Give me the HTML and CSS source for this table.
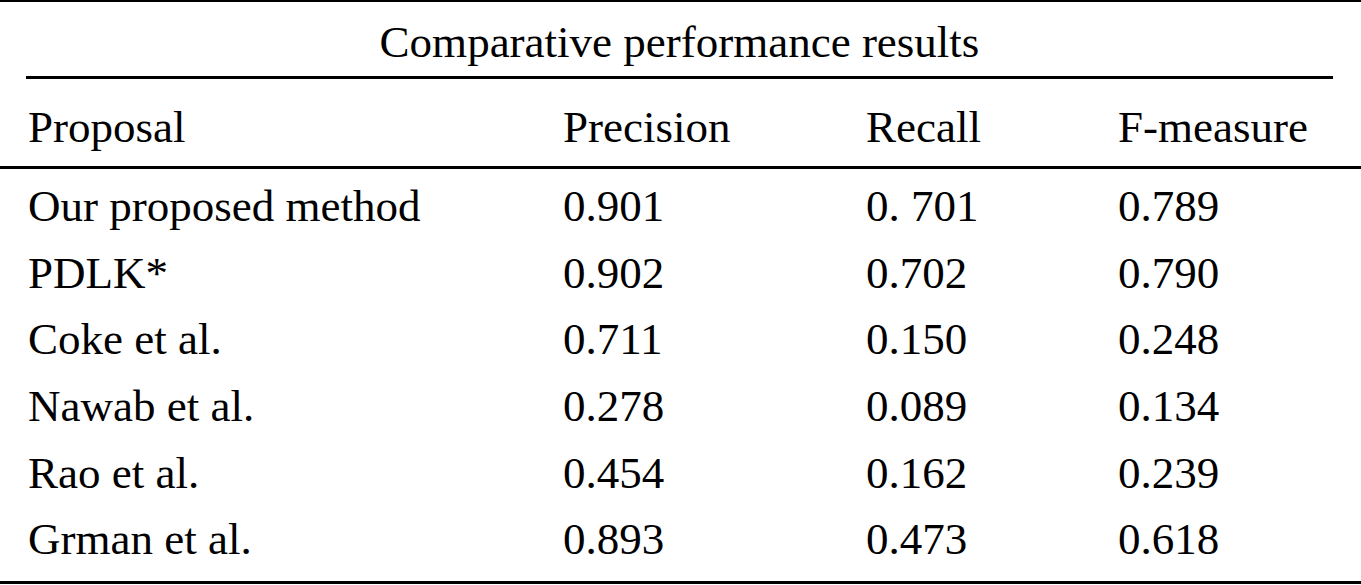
FILE: index.html
```html
<!DOCTYPE html>
<html lang="en">
<head>
<meta charset="utf-8">
<title>Comparative performance results</title>
<link rel="stylesheet" href="styles.css">
</head>
<body>
<div class="table">
  <div class="rule rule-top"></div>
  <div class="caption-wrap">
    <div class="caption">Comparative performance results</div>
  </div>
  <div class="rule rule-mid"></div>
  <div class="row head">
    <div class="c1">Proposal</div>
    <div class="c2">Precision</div>
    <div class="c3">Recall</div>
    <div class="c4">F-measure</div>
  </div>
  <div class="rule rule-full"></div>
  <div class="body">
    <div class="row data"><div class="c1">Our proposed method</div><div class="c2">0.901</div><div class="c3">0. 701</div><div class="c4">0.789</div></div>
    <div class="row data"><div class="c1">PDLK*</div><div class="c2">0.902</div><div class="c3">0.702</div><div class="c4">0.790</div></div>
    <div class="row data"><div class="c1">Coke et al.</div><div class="c2">0.711</div><div class="c3">0.150</div><div class="c4">0.248</div></div>
    <div class="row data"><div class="c1">Nawab et al.</div><div class="c2">0.278</div><div class="c3">0.089</div><div class="c4">0.134</div></div>
    <div class="row data"><div class="c1">Rao et al.</div><div class="c2">0.454</div><div class="c3">0.162</div><div class="c4">0.239</div></div>
    <div class="row data"><div class="c1">Grman et al.</div><div class="c2">0.893</div><div class="c3">0.473</div><div class="c4">0.618</div></div>
  </div>
  <div class="rule rule-bottom"></div>
</div>
</body>
</html>
```
FILE: styles.css
```css
html, body {
  margin: 0;
  padding: 0;
  background: #ffffff;
}
body {
  font-family: "Liberation Serif", "Times New Roman", serif;
  font-size: 45px;
  color: #000000;
  width: 1361px;
  height: 585px;
  overflow: hidden;
}
.table {
  display: flex;
  flex-direction: column;
  width: 1361px;
}
.rule {
  background: #000000;
}
.rule-top {
  height: 2px;
}
.caption-wrap {
  padding: 15px 28px 9px 26px;
}
.caption {
  text-align: center;
  line-height: 50px;
  white-space: nowrap;
}
.rule-mid {
  height: 3px;
  margin: 0 28px 0 26px;
}
.rule-full {
  height: 3px;
}
.rule-bottom {
  height: 3px;
  margin-top: 8px;
}
.row {
  display: grid;
  grid-template-columns: 535px 303px 252px 1fr;
  padding-left: 28px;
  white-space: nowrap;
}
.head {
  line-height: 50px;
  padding-top: 23px;
  padding-bottom: 14px;
}
.body {
  padding-top: 4px;
}
.data {
  line-height: 66.67px;
  height: 66.67px;
}
```
